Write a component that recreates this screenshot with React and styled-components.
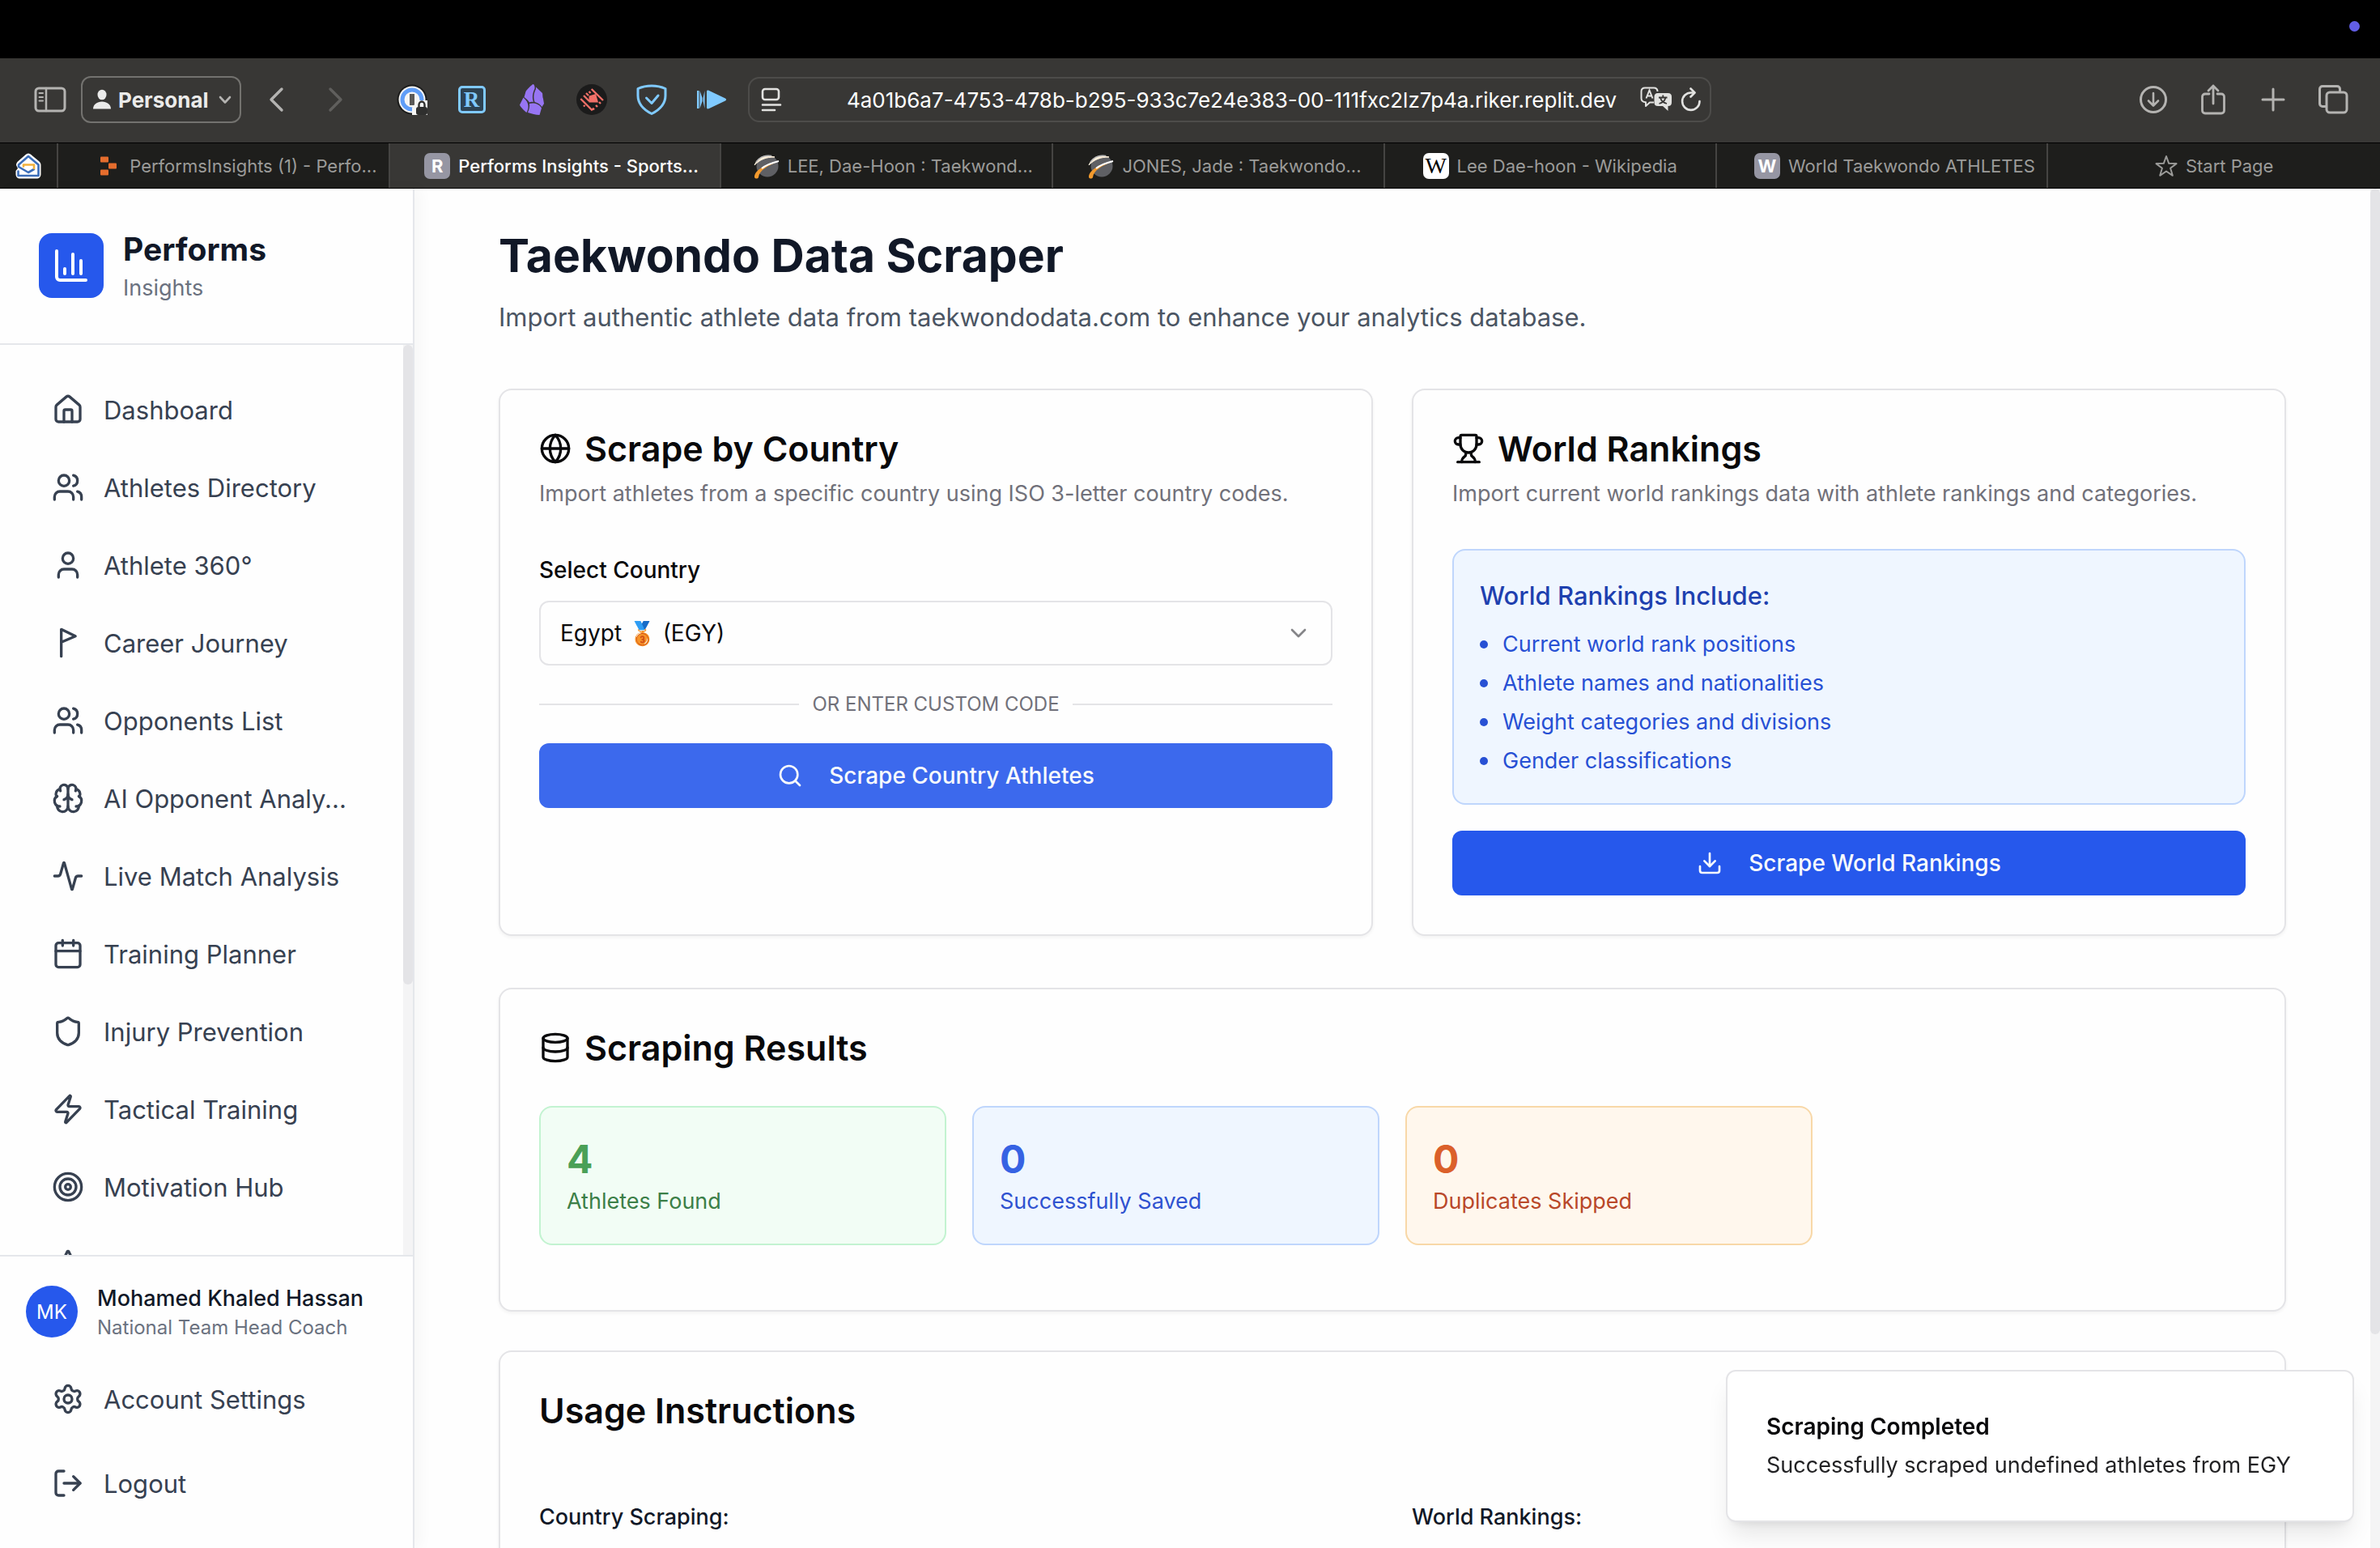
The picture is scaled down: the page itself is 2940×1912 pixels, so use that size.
import React from "react";
import styled, { createGlobalStyle } from "styled-components";
import {
  House, Users, User, Brain, Activity, Calendar, Shield, Zap, Target, Star,
  Settings, LogOut, Globe, Trophy, Database, Search, Download, ChevronDown,
} from "lucide-react";

const GlobalStyle = createGlobalStyle`
  *, *::before, *::after { box-sizing: border-box; }
  body { margin: 0; background: #000; }
  body, button, input, select {
    font-family: Inter, "Liberation Sans", "Noto Color Emoji", sans-serif;
  }
  h1, h2, h3, p, ul { margin: 0; padding: 0; }
`;

const Screen = styled.div`
  display: flex;
  flex-direction: column;
  height: 100vh;
  overflow: hidden;
  color: #09090b;
`;

/* ---------- Browser window ---------- */

const MenuBar = styled.div`
  flex: none;
  display: flex;
  justify-content: flex-end;
  align-items: center;
  height: 72px;
  padding: 0 25px 8px;
  background: #000;
`;

const RecordingDot = styled.span`
  width: 13px;
  height: 13px;
  border-radius: 50%;
  background: #625ee6;
`;

const Toolbar = styled.div`
  flex: none;
  display: flex;
  align-items: center;
  height: 104px;
  padding: 0 39px 2px 40px;
  background: #383735;
`;

const ToolButton = styled.button`
  flex: none;
  display: flex;
  align-items: center;
  justify-content: center;
  width: ${(p) => p.$width || 38}px;
  height: 44px;
  padding: 0;
  border: 0;
  background: none;
  color: ${(p) => (p.$dim ? "#605f5d" : "#b4b3b1")};
`;

const ToolGroup = styled.div`
  flex: none;
  display: flex;
  align-items: center;
  gap: 36px;
  margin-left: ${(p) => p.$push || "0"};
`;

const ProfileButton = styled.button`
  flex: none;
  display: flex;
  align-items: center;
  gap: 8px;
  height: 58px;
  margin: 0 24px 0 16px;
  padding: 0 10px 0 12px;
  border: 2px solid #73726f;
  border-radius: 12px;
  background: none;
  color: #ebebea;
  font-size: 26px;
  font-weight: 700;
  svg:last-child { margin-left: 4px; color: #b4b3b1; }
`;

const AddressBar = styled.div`
  flex: 0 1 1190px;
  display: flex;
  align-items: center;
  gap: 10px;
  height: 56px;
  margin-left: 26px;
  padding: 0 10px 0 14px;
  border: 2px solid #4d4c4a;
  border-radius: 14px;
  color: #e2e2e0;
`;

const AddressInput = styled.input`
  flex: 1;
  min-width: 0;
  height: 100%;
  padding: 0 0 0 52px;
  border: 0;
  background: none;
  color: #fff;
  font-size: 26px;
  text-align: center;
`;

const TabStrip = styled.div`
  flex: none;
  display: grid;
  grid-template-columns: 72px repeat(7, minmax(0, 1fr));
  height: 57px;
  border-top: 1px solid #000;
  border-bottom: 1px solid #000;
  background: #1e1e1c;
`;

const Tab = styled.button`
  display: flex;
  align-items: center;
  justify-content: center;
  gap: 10px;
  padding: 0 0 0 ${(p) => p.$inset || 0}px;
  border: 0;
  border-right: 2px solid #454442;
  background: ${(p) => (p.$active ? "#383735" : "none")};
  color: ${(p) => (p.$active ? "#fff" : "#9b9b99")};
  font-size: 22px;
  font-weight: ${(p) => (p.$active ? 500 : 400)};
  white-space: nowrap;
  &:last-child { border-right: 0; }
`;

const LetterIcon = styled.span`
  display: flex;
  align-items: center;
  justify-content: center;
  width: 32px;
  height: 32px;
  border-radius: 7px;
  background: ${(p) => (p.$white ? "#fff" : "#9696a3")};
  color: ${(p) => (p.$white ? "#000" : "#fff")};
  font-family: ${(p) => (p.$white ? '"Liberation Serif", serif' : "inherit")};
  font-size: ${(p) => (p.$white ? 28 : 22)}px;
  font-weight: ${(p) => (p.$white ? 400 : 700)};
`;

/* ---------- Application shell ---------- */

const Page = styled.div`
  flex: 1;
  min-height: 0;
  display: flex;
  background: #fefefe;
`;

const Sidebar = styled.aside`
  flex: none;
  display: flex;
  flex-direction: column;
  width: 512px;
  border-right: 2px solid #e5e7eb;
  box-shadow: 8px 0 16px rgba(0, 0, 0, 0.03);
`;

const Brand = styled.div`
  flex: none;
  display: flex;
  align-items: center;
  gap: 24px;
  padding: 47px 48px 48px;
  border-bottom: 2px solid #e5e7eb;
`;

const BrandMark = styled.span`
  display: flex;
  align-items: center;
  justify-content: center;
  width: 80px;
  height: 80px;
  border-radius: 16px;
  background: #2658ec;
  color: #fff;
`;

const BrandName = styled.div`
  color: #111827;
  font-size: 39px;
  font-weight: 700;
  line-height: 56px;
`;

const BrandSub = styled.div`
  color: #6b7280;
  font-size: 27px;
  line-height: 40px;
`;

const NavArea = styled.div`
  flex: 1;
  min-height: 0;
  display: flex;
`;

const Nav = styled.nav`
  flex: 1;
  min-width: 0;
  overflow: hidden;
  padding: 32px;
`;

const NavLink = styled.a`
  display: flex;
  align-items: center;
  gap: 24px;
  height: ${(p) => (p.$tall ? 104 : 96)}px;
  padding: 0 32px;
  color: #374151;
  font-size: 31px;
  text-decoration: none;
  white-space: nowrap;
  svg { flex: none; }
`;

const ScrollTrack = styled.div`
  flex: none;
  width: 12px;
  background: #f4f4f5;
`;

const ScrollThumb = styled.div`
  height: ${(p) => p.$size};
  border-radius: 6px;
  background: #e4e4e7;
`;

const SidebarFooter = styled.div`
  flex: none;
  padding: 32px 32px 28px;
  border-top: 2px solid #e5e7eb;
`;

const UserRow = styled.div`
  display: flex;
  align-items: center;
  gap: 24px;
  margin-bottom: 20px;
`;

const Avatar = styled.span`
  display: flex;
  align-items: center;
  justify-content: center;
  width: 64px;
  height: 64px;
  border-radius: 50%;
  background: #2658ec;
  color: #fff;
  font-size: 24px;
`;

const UserName = styled.div`
  color: #111827;
  font-size: 27px;
  font-weight: 500;
  line-height: 40px;
  white-space: nowrap;
`;

const UserRole = styled.div`
  color: #6b7280;
  font-size: 24px;
  line-height: 32px;
`;

const Main = styled.main`
  flex: 1;
  min-width: 0;
  overflow: hidden;
  padding: 47px 104px;
`;

const PageTitle = styled.h1`
  color: #111827;
  font-size: 57px;
  font-weight: 700;
  line-height: 72px;
`;

const PageIntro = styled.p`
  margin: 16px 0 64px;
  color: #4b5563;
  font-size: 31px;
  line-height: 48px;
`;

const CardRow = styled.div`
  display: grid;
  grid-template-columns: 1fr 1fr;
  gap: 48px;
  margin-bottom: 64px;
`;

const Card = styled.section`
  margin-bottom: ${(p) => p.$below || 0}px;
  padding: 48px 48px ${(p) => p.$bottom || 48}px;
  border: 2px solid #e4e4e7;
  border-radius: 16px;
  background: #fefefe;
  box-shadow: 0 2px 4px rgba(0, 0, 0, 0.05);
`;

const CardTitle = styled.h2`
  display: flex;
  align-items: center;
  gap: 16px;
  font-size: 43px;
  font-weight: 600;
  line-height: 48px;
`;

const CardText = styled.p`
  margin-top: 12px;
  color: #71717a;
  font-size: 27px;
  line-height: 40px;
`;

const CardBody = styled.div`
  display: flex;
  flex-direction: column;
  gap: 32px;
  margin-top: 48px;
`;

const Field = styled.div`
  display: flex;
  flex-direction: column;
  gap: 12px;
`;

const Label = styled.label`
  font-size: 28px;
  font-weight: 500;
  line-height: 52px;
`;

const SelectBox = styled.div`
  display: grid;
  align-items: center;
  > * { grid-area: 1 / 1; }
  svg { justify-self: end; margin-right: 26px; color: #858588; pointer-events: none; }
`;

const Select = styled.select`
  width: 100%;
  height: 80px;
  padding: 0 24px;
  border: 2px solid #e4e4e7;
  border-radius: 12px;
  background: #fefefe;
  color: #09090b;
  font-size: 28px;
  appearance: none;
`;

const Divider = styled.div`
  display: flex;
  align-items: center;
  gap: 16px;
  color: #71717a;
  font-size: 24px;
  line-height: 32px;
  text-transform: uppercase;
  &::before, &::after {
    content: "";
    flex: 1;
    height: 2px;
    background: #e4e4e7;
  }
`;

const PrimaryButton = styled.button`
  display: flex;
  align-items: center;
  justify-content: center;
  gap: 32px;
  height: 80px;
  border: 0;
  border-radius: 12px;
  background: ${(p) => (p.$hover ? "#3c69ed" : "#2658ec")};
  color: #f8fafc;
  font-size: 28px;
  font-weight: 500;
`;

const InfoBox = styled.div`
  padding: 32px;
  border: 2px solid #bfd6fc;
  border-radius: 16px;
  background: #eff6ff;
`;

const InfoTitle = styled.h3`
  margin-bottom: 16px;
  color: #1e40af;
  font-size: 31px;
  font-weight: 500;
  line-height: 48px;
`;

const InfoList = styled.ul`
  display: flex;
  flex-direction: column;
  gap: 8px;
  list-style: none;
  color: #2750d4;
  font-size: 27px;
  line-height: 40px;
`;

const InfoItem = styled.li`
  display: flex;
  align-items: center;
  gap: 18px;
  &::before {
    content: "";
    width: 10px;
    height: 10px;
    border-radius: 50%;
    background: currentColor;
  }
`;

const StatGrid = styled.div`
  display: grid;
  grid-template-columns: repeat(4, 1fr);
  gap: 32px;
  margin-top: 48px;
`;

const tones = {
  green: { bg: "#f2fdf5", line: "#c3f3d1", value: "#4aa057", text: "#3c7f48" },
  blue: { bg: "#eff6ff", line: "#bfd6fc", value: "#3662e3", text: "#2f52d0" },
  orange: { bg: "#fff7ed", line: "#f8d8a8", value: "#db602a", text: "#b9482a" },
};

const Stat = styled.div`
  padding: 32px;
  border: 2px solid ${(p) => tones[p.$tone].line};
  border-radius: 16px;
  background: ${(p) => tones[p.$tone].bg};
  color: ${(p) => tones[p.$tone].text};
  font-size: 27px;
  line-height: 40px;
`;

const StatValue = styled.div`
  color: ${(p) => tones[p.$tone].value};
  font-size: 48px;
  font-weight: 700;
  line-height: 64px;
`;

const Guide = styled.div`
  display: grid;
  grid-template-columns: 1fr 1fr;
  gap: 48px;
  margin-top: 84px;
`;

const GuideTitle = styled.h3`
  color: #111827;
  font-size: 27px;
  font-weight: 500;
  line-height: 48px;
`;

const Toast = styled.div`
  position: fixed;
  right: 32px;
  bottom: 32px;
  width: 776px;
  padding: 48px;
  border: 2px solid #e4e4e7;
  border-radius: 12px;
  background: #fff;
  box-shadow: 0 20px 30px -6px rgba(0, 0, 0, 0.1), 0 8px 12px -8px rgba(0, 0, 0, 0.1);
  font-size: 27px;
  line-height: 40px;
  white-space: nowrap;
`;

const ToastTitle = styled.div`
  margin-bottom: 8px;
  font-size: 28px;
  font-weight: 600;
`;

const ToastText = styled.div`
  color: #222224;
`;

/* ---------- Drawings ---------- */

const Line = ({ w, h, box, children, sw = 3 }) => (
  <svg width={w} height={h} viewBox={box || `0 0 ${w} ${h}`} fill="none" stroke="currentColor"
    strokeWidth={sw} strokeLinecap="round" strokeLinejoin="round" aria-hidden="true">
    {children}
  </svg>
);

const SidebarIcon = () => (
  <Line w={40} h={32}>
    <rect x="2" y="2" width="36" height="28" rx="4" />
    <path d="M15 2v28" strokeWidth="2.5" />
    <path d="M6.500 8h4.500M6.500 13h4.500M6.500 17.500h4.500" strokeWidth="2" />
  </Line>
);

const PersonIcon = () => (
  <svg width="24" height="26" viewBox="0 0 24 26" fill="currentColor" aria-hidden="true">
    <ellipse cx="12" cy="7" rx="5.500" ry="6.300" />
    <path d="M1 24.500c0-5.500 5-9 11-9s11 3.500 11 9z" />
  </svg>
);

const OnePassword = () => (
  <svg width="38" height="38" viewBox="0 0 38 38" aria-hidden="true">
    <circle cx="19" cy="19" r="18.500" fill="#1b1b1a" />
    <circle cx="19" cy="19" r="16.500" fill="#f5f5f4" />
    <circle cx="19" cy="19" r="12" fill="#f5f5f4" stroke="#5f9df7" strokeWidth="5" />
    <rect x="16" y="12" width="6" height="14" fill="#5a5957" />
    <path d="M19 38V29l7-9h12v18z" fill="#f5f5f4" />
    <rect x="24" y="28" width="14" height="10" rx="3" fill="#2f2f2e" />
    <path d="M27.500 28v-2.500a3.500 4 0 0 1 7 0V28" fill="none" stroke="#2f2f2e" strokeWidth="2.400" />
  </svg>
);

const ReaderLetter = styled.span`
  display: flex;
  align-items: center;
  justify-content: center;
  width: 34px;
  height: 34px;
  border: 3px solid #80caff;
  border-radius: 5px;
  background: #2d4252;
  color: #80caff;
  font-family: "Liberation Serif", serif;
  font-size: 27px;
  font-weight: 700;
`;

const Obsidian = () => (
  <svg width="38" height="38" viewBox="0 0 38 38" fill="#9775f3" aria-hidden="true">
    <path d="M20.500 0c-1 0-8 7-9 9L9.500 16c2.500 2 5 4 6.500 6.500 1.500-.8 3-1 5-.5C19 16 20 11 22.500 5.500 23 3.500 22 0 20.500 0z" />
    <path d="M24 3.500 32 11c.5 2 0 5 1 7l1 6-2.500 4c-2-3-5-5-9-6C20.500 15.500 21.500 11 24 6z" />
    <path d="M8.500 16.500 4 25.500c0 1.500 6 8 8.500 9.500 3-6 3.500-12-4-18.500z" />
    <path d="M16 24c5-1.500 12 0 15 5.500L28.500 38c-5 0-10-2-14.500-3 1.500-4 2.500-7 2-11z" />
  </svg>
);

const RayTrace = () => (
  <svg width="38" height="38" viewBox="0 0 38 38" aria-hidden="true">
    <circle cx="19" cy="19" r="19" fill="#1b1b1b" />
    <path d="M15.500 14.500 24 12l3 10.500H15.500z" fill="#f27068" />
    <path d="M18.700 6 33 20M5.300 18l14.500 14.500M9 14l7 7M12 11l3 3M15.500 9l2 2M9 26l1.500 1.500M20 29.500l2 2M24 26l2 2M28 22l2 2"
      stroke="#f27068" strokeWidth="2.400" />
  </svg>
);

const GuardIcon = () => (
  <Line w={38} h={38}>
    <g stroke="#80caff">
      <path d="M19 2c6 0 12 1.200 17 3.500V14c0 10-7 17.500-17 22.500C9 31.500 2 24 2 14V5.500C7 3.200 13 2 19 2z" />
      <path d="m12.500 17 6.500 6.500 8-9.500" />
    </g>
  </Line>
);

const SpeedIcon = () => (
  <svg width="38" height="24" viewBox="0 0 38 24" fill="#80caff" aria-hidden="true">
    <path d="M1 1h2.500v22H1zM4.500 1 7.500 10v4L4.500 23zM10.500 1v22L8.500 14v-4z" />
    <path d="M13 2.500c0-2 1-2.500 3-1.500l20 9.500c1.500.8 1.500 2.200 0 3L16 23c-2 1-3 .5-3-1.500z" />
  </svg>
);

const PageMenuIcon = () => (
  <Line w={26} h={30} sw={2.6}>
    <rect x="2" y="2" width="20" height="13" rx="3" />
    <path d="M2 21.500h22M2 28h15" />
  </Line>
);

const TranslateIcon = () => (
  <svg width="40" height="32" viewBox="0 0 40 32" fill="none" aria-hidden="true">
    <path d="M17 19.500H12l-5 4.500v-4.700C3.500 19 1.500 17.500 1.500 14.500V6c0-3 1.500-4.500 4.500-4.500h11c3 0 4.500 1.500 4.500 4.500"
      stroke="#e2e2e0" strokeWidth="2" strokeLinejoin="round" />
    <path d="m7.500 14.500 4-10 4 10M8.800 11.500h5.400" stroke="#e2e2e0" strokeWidth="2" />
    <path d="M22 8h12.500C37.500 8 39 9.500 39 12.500v7c0 3-1.500 4.500-4.500 4.500v6L28 24h-6c-3 0-4.500-1.500-4.500-4.500v-7C17.500 9.500 19 8 22 8z" fill="#e2e2e0" />
    <path d="M28.300 10.500v2.500M23 13.500h10.500M25 13.500c1 4 4 6.500 8 7.500M31.500 13.500c-1 4-4 6.500-8 7.500" stroke="#383735" strokeWidth="1.800" />
  </svg>
);

const ReloadIcon = () => (
  <Line w={26} h={30} sw={2.6}>
    <path d="M23.500 17A10.700 10.700 0 1 1 13 6.500h4" />
    <path d="m12.500 1.500 5 5-5 5" />
  </Line>
);

const DownloadsIcon = () => (
  <Line w={36} h={36}>
    <circle cx="18" cy="18" r="15.500" />
    <path d="M18 10v15M12 19.500l6 6 6-6" strokeWidth="2.600" />
  </Line>
);

const ShareIcon = () => (
  <Line w={32} h={38} sw={2.8}>
    <path d="M11 12H6c-2 0-3.500 1.500-3.500 3.500v17C2.500 34.500 4 36 6 36h20c2 0 3.500-1.500 3.500-3.500v-17c0-2-1.500-3.500-3.500-3.500h-5M16 24V2M10 8l6-6 6 6" />
  </Line>
);

const PlusIcon = () => (
  <Line w={30} h={30}>
    <path d="M15 2v26M2 15h26" />
  </Line>
);

const WindowsIcon = () => (
  <Line w={38} h={38}>
    <rect x="11" y="10" width="25" height="25" rx="4" />
    <path d="M10.500 27.500H6c-2 0-3.500-1.500-3.500-3.500V6C2.500 4 4 2.500 6 2.500h18c2 0 3.500 1.500 3.500 3.500v3" />
  </Line>
);

const MailHouse = () => (
  <svg width="32" height="32" viewBox="0 0 32 32" fill="none" strokeLinejoin="round" strokeLinecap="round" aria-hidden="true">
    <path d="M16 .5c1.500 0 3 1 4.500 2.500l8.500 7c1.800 1.500 2.500 3 2.500 5v11c0 3.500-2 5.500-5.500 5.500H6C2.500 31.500.5 29.500.5 26v-4l2.500-3-2-4c0-2 1-4 2.500-5l8-7C13 1.500 14.500.5 16 .5z" fill="#fff" />
    <path d="M3.500 22.500V28h25V14.500L16 4 4 14.500v2.500l12 7 7-4" stroke="#3b6db8" strokeWidth="2.600" />
    <path d="M10 16.500v-2h13V19" stroke="#f2b13c" strokeWidth="2.600" />
  </svg>
);

const Blocks = () => (
  <svg width="32" height="24" viewBox="-6 0 32 24" fill="#e56d2d" aria-hidden="true">
    <rect x="0" y="0.500" width="10" height="7" rx="1" />
    <rect x="10" y="8.500" width="10" height="7" rx="1" />
    <rect x="0" y="16.500" width="10" height="7" rx="1" />
  </svg>
);

const DataGlobe = () => (
  <svg width="32" height="32" viewBox="0 0 32 32" fill="none" aria-hidden="true">
    <circle cx="17" cy="16" r="13.500" fill="#5f6064" />
    <path d="M1 15C5 6 13 1.500 26 5 15 5 8 8 1 15z" fill="#fff1dc" stroke="#fff1dc" />
    <path d="M1 30c0-9 12-15 30-20C17 16 7 21 6 30c-1 2-4 2-5 0z" fill="#f39a2d" />
    <path d="M10 19c6-5 13-7 21-9" stroke="#fff" strokeWidth="2" />
    <path d="M3 11C8 4 15 2.500 22 3.500" stroke="#b5b5b6" strokeWidth="1.500" />
  </svg>
);

const StarOutline = () => (
  <Line w={28} h={28} sw={2}>
    <path d="m14 2 3.200 8.800 9.300.3-7.400 5.700 2.700 9L14 20.500l-7.800 5.300 2.700-9L1.500 11.100l9.300-.3z" />
  </Line>
);

const ChartIcon = () => (
  <Line w={48} h={48} box="0 0 24 24" sw={2}>
    <path d="M3 3v16a2 2 0 0 0 2 2h16M8 17v-3M13 17V5M18 17V9" />
  </Line>
);

const PennantIcon = () => (
  <Line w={40} h={40} box="0 0 24 24" sw={2}>
    <path d="M7 22V2l10.500 5L7 11.500" />
  </Line>
);

/* ---------- Data ---------- */

const navItems = [
  [House, "Dashboard"],
  [Users, "Athletes Directory"],
  [User, "Athlete 360°"],
  [PennantIcon, "Career Journey"],
  [Users, "Opponents List"],
  [Brain, "AI Opponent Analy..."],
  [Activity, "Live Match Analysis"],
  [Calendar, "Training Planner"],
  [Shield, "Injury Prevention"],
  [Zap, "Tactical Training"],
  [Target, "Motivation Hub"],
  [Star, ""],
];

const rankingIncludes = [
  "Current world rank positions",
  "Athlete names and nationalities",
  "Weight categories and divisions",
  "Gender classifications",
];

const stats = [
  ["green", "4", "Athletes Found"],
  ["blue", "0", "Successfully Saved"],
  ["orange", "0", "Duplicates Skipped"],
];

const tabs = [
  { icon: <Blocks />, title: "PerformsInsights (1) - Perfo...", inset: 32 },
  { icon: <LetterIcon>R</LetterIcon>, title: "Performs Insights - Sports...", inset: 16, active: true },
  { icon: <DataGlobe />, title: "LEE, Dae-Hoon : Taekwond...", inset: 16 },
  { icon: <DataGlobe />, title: "JONES, Jade : Taekwondo...", inset: 16 },
  { icon: <LetterIcon $white>W</LetterIcon>, title: "Lee Dae-hoon - Wikipedia" },
  { icon: <LetterIcon>W</LetterIcon>, title: "World Taekwondo ATHLETES", inset: 32 },
  { icon: <StarOutline />, title: "Start Page" },
];

function BrowserChrome() {
  return (
    <>
      <MenuBar><RecordingDot /></MenuBar>
      <Toolbar>
        <ToolButton $width={44} aria-label="Show sidebar"><SidebarIcon /></ToolButton>
        <ProfileButton>
          <PersonIcon />
          Personal
          <Line w={16} h={12} sw={2.6}><path d="m2 3 6 6.500L14 3" /></Line>
        </ProfileButton>
        <ToolGroup>
          <ToolButton aria-label="Back"><Line w={20} h={32} sw={3.4}><path d="M17 3 4 16l13 13" /></Line></ToolButton>
          <ToolButton $dim aria-label="Forward"><Line w={20} h={32} sw={3.4}><path d="m3 3 13 13L3 29" /></Line></ToolButton>
        </ToolGroup>
        <ToolGroup $push="56px">
          <ToolButton aria-label="Passwords"><OnePassword /></ToolButton>
          <ToolButton aria-label="Reader"><ReaderLetter>R</ReaderLetter></ToolButton>
          <ToolButton aria-label="Notes"><Obsidian /></ToolButton>
          <ToolButton aria-label="Inspector"><RayTrace /></ToolButton>
          <ToolButton aria-label="Blocker"><GuardIcon /></ToolButton>
          <ToolButton aria-label="Playback speed"><SpeedIcon /></ToolButton>
        </ToolGroup>
        <AddressBar>
          <PageMenuIcon />
          <AddressInput aria-label="Address" readOnly
            value="4a01b6a7-4753-478b-b295-933c7e24e383-00-111fxc2lz7p4a.riker.replit.dev" />
          <TranslateIcon />
          <ReloadIcon />
        </AddressBar>
        <ToolGroup $push="auto">
          <ToolButton aria-label="Downloads"><DownloadsIcon /></ToolButton>
          <ToolButton aria-label="Share"><ShareIcon /></ToolButton>
          <ToolButton aria-label="New tab"><PlusIcon /></ToolButton>
          <ToolButton aria-label="Tab overview"><WindowsIcon /></ToolButton>
        </ToolGroup>
      </Toolbar>
      <TabStrip>
        <Tab aria-label="Mail"><MailHouse /></Tab>
        {tabs.map(({ icon, title, inset, active }) => (
          <Tab key={title} $inset={inset} $active={active}>{icon}{title}</Tab>
        ))}
      </TabStrip>
    </>
  );
}

function AppSidebar() {
  return (
    <Sidebar>
      <Brand>
        <BrandMark><ChartIcon /></BrandMark>
        <div>
          <BrandName>Performs</BrandName>
          <BrandSub>Insights</BrandSub>
        </div>
      </Brand>
      <NavArea>
        <Nav>
          {navItems.map(([Icon, label]) => (
            <NavLink key={label} href="#"><Icon size={40} />{label}</NavLink>
          ))}
        </Nav>
        <ScrollTrack><ScrollThumb $size="70.3%" /></ScrollTrack>
      </NavArea>
      <SidebarFooter>
        <UserRow>
          <Avatar>MK</Avatar>
          <div>
            <UserName>Mohamed Khaled Hassan</UserName>
            <UserRole>National Team Head Coach</UserRole>
          </div>
        </UserRow>
        <NavLink $tall href="#"><Settings size={40} />Account Settings</NavLink>
        <NavLink $tall href="#"><LogOut size={40} />Logout</NavLink>
      </SidebarFooter>
    </Sidebar>
  );
}

export default function App() {
  return (
    <Screen>
      <GlobalStyle />
      <BrowserChrome />
      <Page>
        <AppSidebar />
        <Main>
          <PageTitle>Taekwondo Data Scraper</PageTitle>
          <PageIntro>Import authentic athlete data from taekwondodata.com to enhance your analytics database.</PageIntro>
          <CardRow>
            <Card>
              <CardTitle><Globe size={40} />Scrape by Country</CardTitle>
              <CardText>Import athletes from a specific country using ISO 3-letter country codes.</CardText>
              <CardBody>
                <Field>
                  <Label htmlFor="country">Select Country</Label>
                  <SelectBox>
                    <Select id="country" defaultValue="EGY">
                      <option value="EGY">Egypt 🥉 (EGY)</option>
                    </Select>
                    <ChevronDown size={32} />
                  </SelectBox>
                </Field>
                <Divider>Or enter custom code</Divider>
                <PrimaryButton $hover><Search size={32} />Scrape Country Athletes</PrimaryButton>
              </CardBody>
            </Card>
            <Card>
              <CardTitle><Trophy size={40} />World Rankings</CardTitle>
              <CardText>Import current world rankings data with athlete rankings and categories.</CardText>
              <CardBody>
                <InfoBox>
                  <InfoTitle>World Rankings Include:</InfoTitle>
                  <InfoList>
                    {rankingIncludes.map((t) => <InfoItem key={t}>{t}</InfoItem>)}
                  </InfoList>
                </InfoBox>
                <PrimaryButton><Download size={32} />Scrape World Rankings</PrimaryButton>
              </CardBody>
            </Card>
          </CardRow>
          <Card $bottom={80} $below={48}>
            <CardTitle><Database size={40} />Scraping Results</CardTitle>
            <StatGrid>
              {stats.map(([tone, value, label]) => (
                <Stat key={label} $tone={tone}>
                  <StatValue $tone={tone}>{value}</StatValue>
                  {label}
                </Stat>
              ))}
            </StatGrid>
          </Card>
          <Card>
            <CardTitle>Usage Instructions</CardTitle>
            <Guide>
              <GuideTitle>Country Scraping:</GuideTitle>
              <GuideTitle>World Rankings:</GuideTitle>
            </Guide>
          </Card>
        </Main>
        <ScrollTrack><ScrollThumb $size="84.3%" /></ScrollTrack>
      </Page>
      <Toast role="status">
        <ToastTitle>Scraping Completed</ToastTitle>
        <ToastText>Successfully scraped undefined athletes from EGY</ToastText>
      </Toast>
    </Screen>
  );
}
